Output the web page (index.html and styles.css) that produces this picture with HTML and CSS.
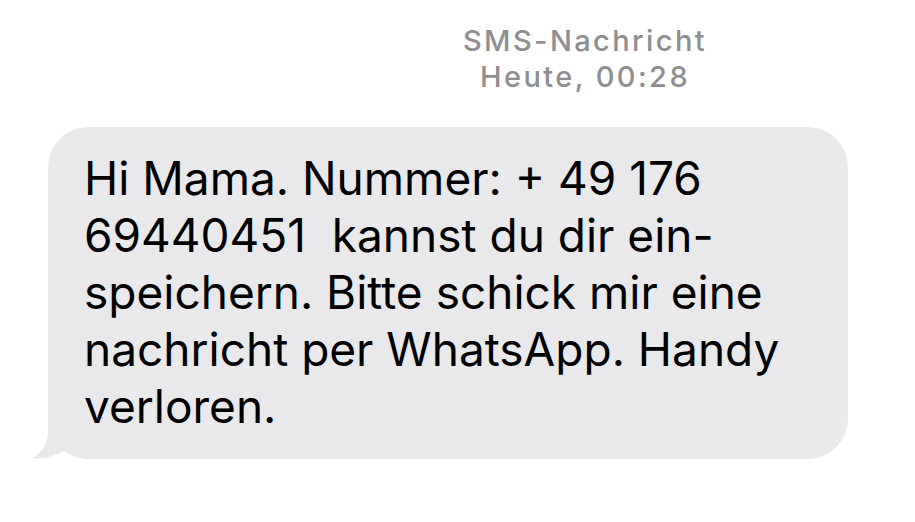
FILE: index.html
```html
<!DOCTYPE html>
<html lang="de">
<head>
<meta charset="utf-8">
<title>SMS-Nachricht</title>
<link rel="stylesheet" href="styles.css">
</head>
<body>
<div class="page">
  <header class="meta">
    <div class="meta-line">SMS-Nachricht</div>
    <div class="meta-line">Heute, 00:28</div>
  </header>
  <div class="bubble">
    <p class="msg">Hi Mama. Nummer: + 49 176<br>69440451 &nbsp;kannst du dir ein-<br>speichern. Bitte schick mir eine<br>nachricht per WhatsApp. Handy<br>verloren.</p>
    <svg class="tail" width="60" height="50" viewBox="0 0 60 50" aria-hidden="true">
      <path d="M16,0 L16,21 C16,36 8,46 0,49 C13,51 26,46 35,39 C43,46 50,50 60,50 L60,0 Z" fill="#e9e9eb"/>
    </svg>
  </div>
</div>
</body>
</html>
```
FILE: styles.css
```css
html, body {
  margin: 0;
  padding: 0;
  background: #ffffff;
}
.page {
  width: 915px;
  height: 522px;
  font-family: Inter, "Liberation Sans", Arial, sans-serif;
}
.meta {
  padding-top: 23px;
  padding-left: 255px;
  text-align: center;
  color: #8e8e93;
  font-size: 29px;
  font-weight: 500;
  letter-spacing: 2.4px;
  line-height: 36px;
}
.bubble {
  position: relative;
  margin-top: 32px;
  margin-left: 48px;
  width: 800px;
  height: 332px;
  box-sizing: border-box;
  background: #e9e9eb;
  border-radius: 40px;
  padding: 23px 20px 0 36px;
}
.msg {
  position: relative;
  z-index: 1;
  margin: 0;
  color: #000000;
  font-size: 46px;
  line-height: 57px;
  white-space: nowrap;
}
.tail {
  position: absolute;
  left: -16px;
  bottom: 0;
  display: block;
  z-index: 0;
}
```
